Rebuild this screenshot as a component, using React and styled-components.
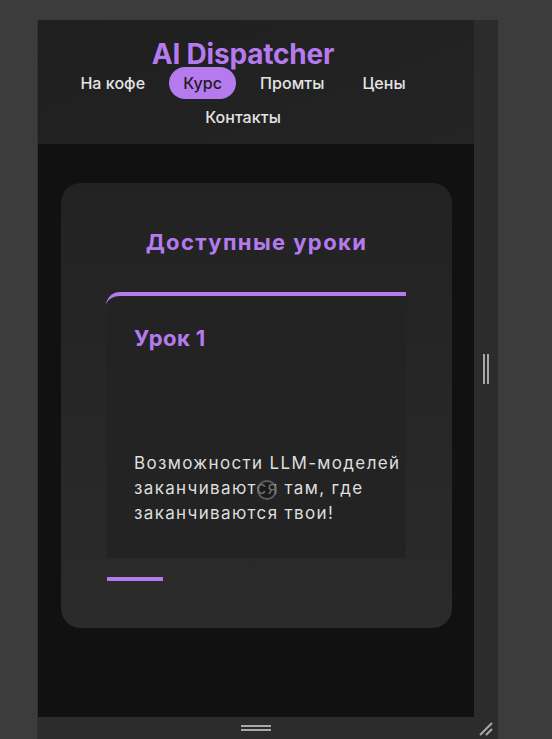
import React from "react";
import styled, { createGlobalStyle } from "styled-components";

const Global = createGlobalStyle`
  html, body { margin: 0; padding: 0; background: #3c3c3c; }
  body { font-family: "Inter", "Noto Sans", sans-serif; -webkit-font-smoothing: antialiased; }
  * { box-sizing: border-box; }
`;

const Stage = styled.div`
  padding: 20px 0 0 37px;
  height: 739px;
  overflow: hidden;
`;

const Frame = styled.div`
  width: 461px;
  height: 719px;
  background: #2c2c2d;
  border-left: 1px solid #333;
  display: grid;
  grid-template-columns: 436px 24px;
  grid-template-rows: 697px 22px;
`;

const Viewport = styled.div`
  display: flex;
  flex-direction: column;
  overflow: hidden;
`;

const Header = styled.header`
  background: linear-gradient(160deg, #1f1f1f 0%, #242424 100%);
  padding: 20px 26px 11px 0;
  display: flex;
  flex-direction: column;
  align-items: center;
`;

const Logo = styled.h1`
  margin: 0;
  font-size: 28px;
  line-height: 29px;
  font-weight: 700;
  color: #b57bee;
  letter-spacing: -0.2px;
`;

const Nav = styled.nav`
  margin-top: -2px;
  display: flex;
  flex-wrap: wrap;
  justify-content: center;
  gap: 2px 10px;
  width: 380px;
`;

const NavLink = styled.a`
  display: flex;
  align-items: center;
  height: 32px;
  padding: 0 14px;
  border-radius: 16px;
  font-size: 16px;
  font-weight: 500;
  letter-spacing: 0.05px;
  color: ${(p) => (p.$active ? "#1c1c1c" : "#e4e4e4")};
  background: ${(p) => (p.$active ? "#b57bee" : "transparent")};
  text-decoration: none;
`;

const Main = styled.main`
  flex: 1;
  background: #111111;
  padding: 39px 22px 0 23px;
`;

const Card = styled.section`
  height: 445px;
  border-radius: 20px;
  background: linear-gradient(180deg, #222222 0%, #2b2b2b 100%);
  padding: 44px 0 0 45px;
  display: flex;
  flex-direction: column;
`;

const CardTitle = styled.h2`
  margin: 0 45px 0 0;
  text-align: center;
  font-size: 22px;
  line-height: 30px;
  font-weight: 700;
  letter-spacing: 1.4px;
  color: #b57bee;
`;

const Lesson = styled.article`
  position: relative;
  margin-top: 35px;
  width: 300px;
  height: 266px;
  background: #232323;
  border-top: 4px solid #b57bee;
  border-top-left-radius: 14px;
  padding: 28px 0 0 28px;
`;

const LessonTitle = styled.h3`
  margin: 0;
  font-size: 22px;
  line-height: 28px;
  font-weight: 700;
  letter-spacing: 0.4px;
  color: #b57bee;
`;

const LessonText = styled.p`
  margin: 99px 0 0;
  width: 276px;
  font-size: 17px;
  line-height: 25px;
  letter-spacing: 1.35px;
  color: #dedede;
`;

const Cursor = styled.span`
  position: absolute;
  left: 151px;
  top: 184px;
  width: 20px;
  height: 20px;
  border-radius: 50%;
  border: 2px solid rgba(120, 120, 120, 0.7);
  background: rgba(20, 20, 20, 0.55);
`;

const Indicator = styled.div`
  margin: 19px 0 0 1px;
  width: 56px;
  height: 4px;
  background: #b57bee;
`;

const SideBar = styled.div`
  display: flex;
  align-items: center;
  justify-content: center;
  padding-right: 1px;
`;

const VGrip = styled.div`
  width: 6px;
  height: 30px;
  border-left: 2px solid #a8a8a8;
  border-right: 2px solid #a8a8a8;
`;

const BottomBar = styled.div`
  display: flex;
  align-items: center;
  justify-content: center;
`;

const HGrip = styled.div`
  width: 30px;
  height: 6px;
  border-top: 2px solid #a8a8a8;
  border-bottom: 2px solid #a8a8a8;
`;

const Corner = styled.div`
  display: flex;
  align-items: flex-end;
  justify-content: flex-start;
  padding: 0 0 3px 5px;
`;

const navItems = ["На кофе", "Курс", "Промты", "Цены", "Контакты"];

export default function App() {
  return (
    <>
      <Global />
      <Stage>
        <Frame>
          <Viewport>
            <Header>
              <Logo>AI Dispatcher</Logo>
              <Nav>
                {navItems.map((n) => (
                  <NavLink key={n} $active={n === "Курс"}>
                    {n}
                  </NavLink>
                ))}
              </Nav>
            </Header>
            <Main>
              <Card>
                <CardTitle>Доступные уроки</CardTitle>
                <Lesson>
                  <LessonTitle>Урок 1</LessonTitle>
                  <LessonText>
                    Возможности LLM-моделей заканчиваются там, где заканчиваются твои!
                  </LessonText>
                  <Cursor />
                </Lesson>
                <Indicator />
              </Card>
            </Main>
          </Viewport>
          <SideBar>
            <VGrip />
          </SideBar>
          <BottomBar>
            <HGrip />
          </BottomBar>
          <Corner>
            <svg width="14" height="14" viewBox="0 0 14 14">
              <path d="M1 13 L13 1 M7 13 L13 7" stroke="#a8a8a8" strokeWidth="2" />
            </svg>
          </Corner>
        </Frame>
      </Stage>
    </>
  );
}
